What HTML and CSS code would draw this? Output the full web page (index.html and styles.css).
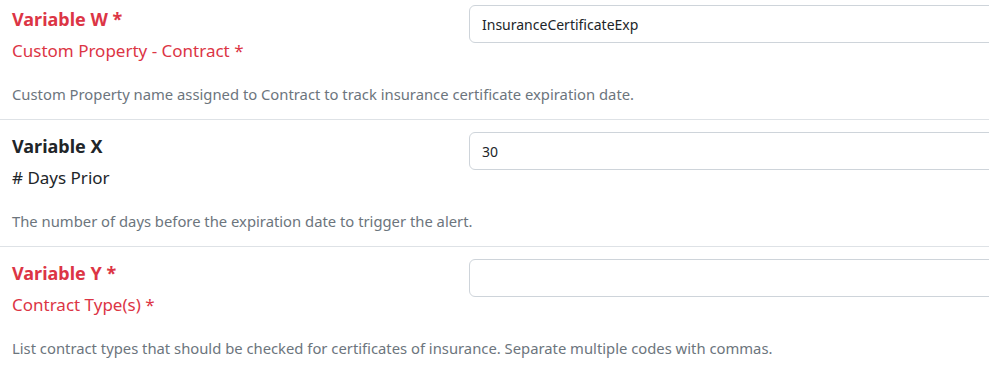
FILE: index.html
```html
<!DOCTYPE html>
<html lang="en">
<head>
<meta charset="utf-8">
<title>Settings</title>
<link rel="stylesheet" href="styles.css">
</head>
<body>
<div class="settings">
  <div class="setting">
    <div class="setting-top">
      <div class="labels">
        <div class="title required">Variable W *</div>
        <div class="subtitle required">Custom Property - Contract *</div>
      </div>
      <div class="field"><input class="form-control" type="text" value="InsuranceCertificateExp"></div>
    </div>
    <div class="desc">Custom Property name assigned to Contract to track insurance certificate expiration date.</div>
  </div>
  <div class="setting">
    <div class="setting-top">
      <div class="labels">
        <div class="title">Variable X</div>
        <div class="subtitle"># Days Prior</div>
      </div>
      <div class="field"><input class="form-control" type="text" value="30"></div>
    </div>
    <div class="desc">The number of days before the expiration date to trigger the alert.</div>
  </div>
  <div class="setting">
    <div class="setting-top">
      <div class="labels">
        <div class="title required">Variable Y *</div>
        <div class="subtitle required">Contract Type(s) *</div>
      </div>
      <div class="field"><input class="form-control" type="text" value=""></div>
    </div>
    <div class="desc">List contract types that should be checked for certificates of insurance. Separate multiple codes with commas.</div>
  </div>
</div>
</body>
</html>
```
FILE: styles.css
```css
html, body {
  margin: 0;
  padding: 0;
  background: #fff;
  overflow: hidden;
}
body {
  font-family: "Noto Sans", "Open Sans", sans-serif;
  color: #212529;
}
.settings {
  margin-top: -7px;
}
.setting {
  padding: 12px 0 14px 12px;
  border-bottom: 1px solid #dee2e6;
}
.setting-top {
  display: grid;
  grid-template-columns: 457px 1fr;
}
.title {
  font-size: 18px;
  font-weight: 700;
  line-height: 27px;
  margin-top: 1px;
  margin-bottom: 6px;
}
.subtitle {
  font-size: 17px;
  line-height: 24px;
}
.required {
  color: #dc3545;
}
.field {
  min-width: 0;
}
.form-control {
  display: block;
  box-sizing: border-box;
  width: 560px;
  height: 38px;
  padding: 0 12px;
  border: 1px solid #ced4da;
  border-radius: 6px;
  font-family: inherit;
  font-size: 14px;
  color: #212529;
  background: #fff;
  outline: none;
}
.desc {
  margin-top: 21px;
  font-size: 14.8px;
  line-height: 21px;
  color: #6c757d;
}
```
